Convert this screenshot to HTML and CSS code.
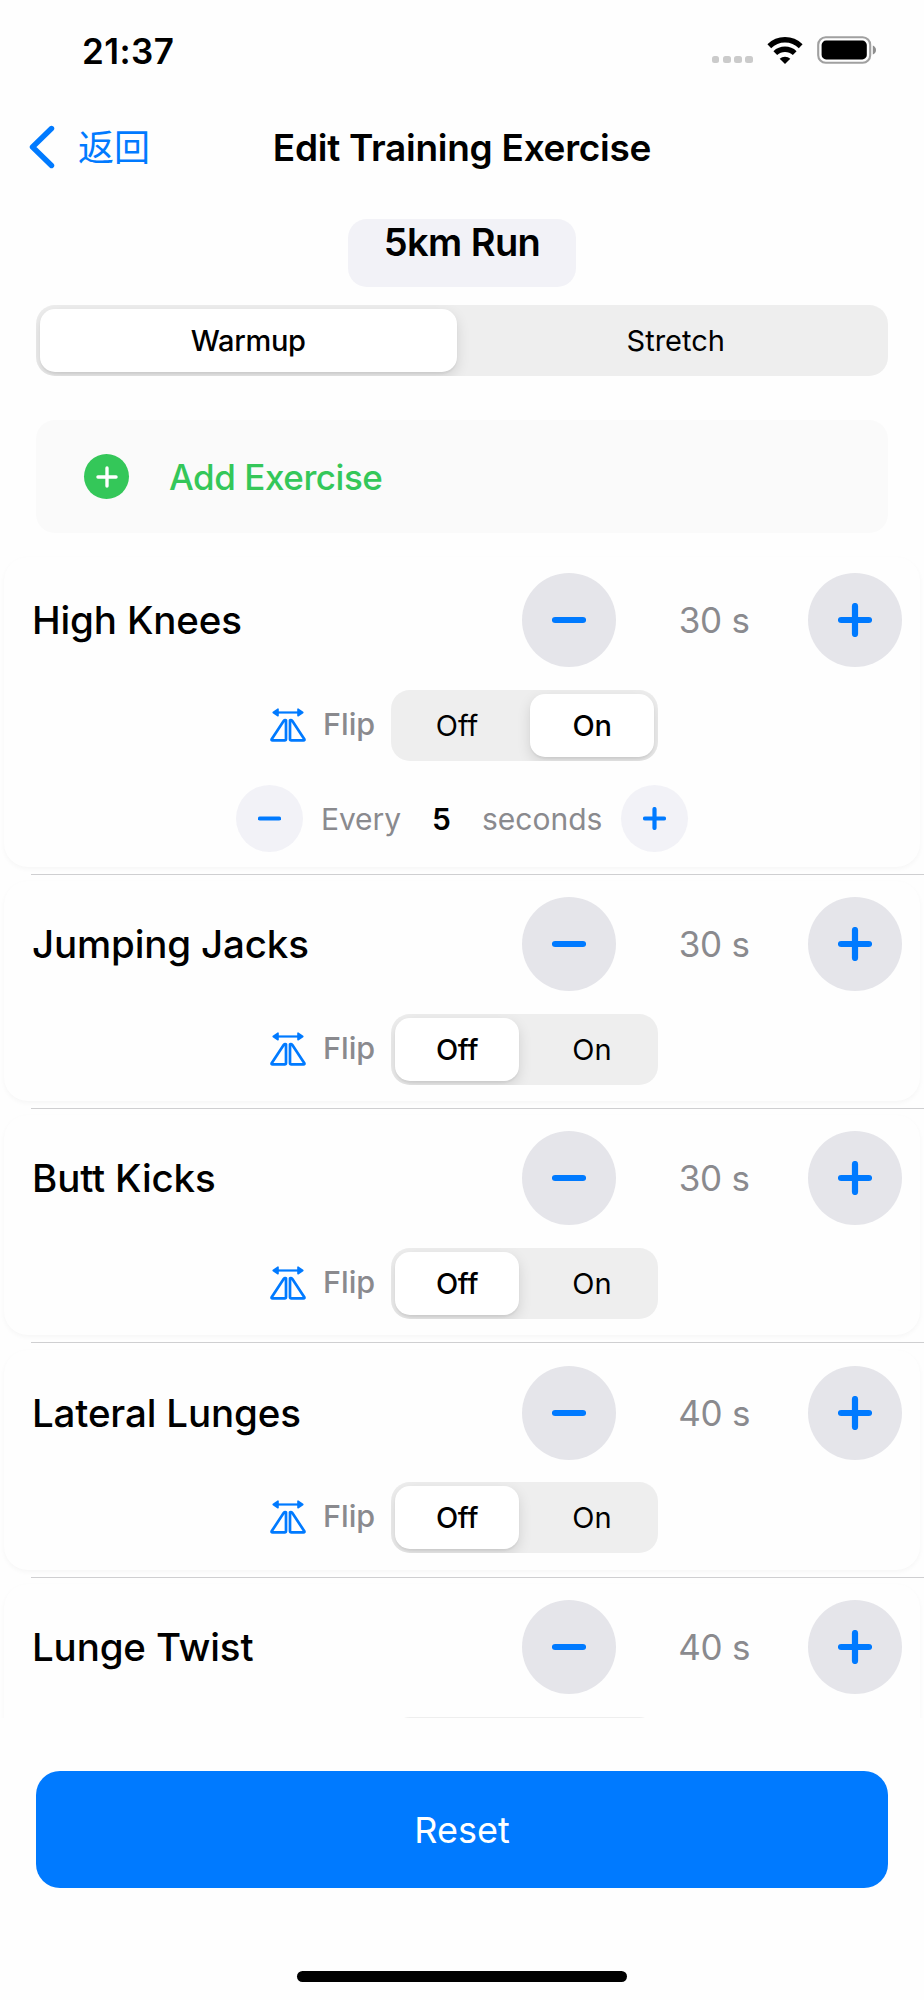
FILE: index.html
```
<!DOCTYPE html>
<html lang="en">
<head>
    <meta charset="utf-8">
    <title>Edit Training Exercise</title>
    <link rel="stylesheet" href="styles.css">
</head>
<body>
    <svg class="sprite">
        <symbol id="icon-minus" viewBox="0 0 34 34">
            <path d="M3 17H31"></path>
        </symbol>
        <symbol id="icon-plus" viewBox="0 0 34 34">
            <path d="M3 17H31M17 3V31"></path>
        </symbol>
        <symbol id="icon-flip" viewBox="0 0 36 34">
            <path d="M5 4.5H31" stroke-width="2.2"></path>
            <path d="M3.2 4.5L8 1.2V7.8ZM32.8 4.5L28 1.2V7.8Z" fill="#007aff" stroke-width="1.6"></path>
            <path d="M16 12.6V31.1Q16 32.4 14.7 32.4H2.6Q1 32.4 1.8 31L13.8 12.8Q14.6 11.8 16 12.2Z"></path>
            <path d="M20 12.6V31.1Q20 32.4 21.3 32.4H33.4Q35 32.4 34.2 31L22.2 12.8Q21.4 11.8 20 12.2Z"></path>
        </symbol>
    </svg>

    <div class="status-bar">
        <span class="time">21:37</span>
        <div class="status-icons">
            <div class="dots"><i></i><i></i><i></i><i></i></div>
            <svg class="wifi" viewBox="0 0 36 27" fill="none" stroke="#000" stroke-width="5.4">
                <path d="M2.3 9.2A22.5 22.5 0 0 1 33.7 9.2"></path>
                <path d="M8.3 16.1A14 14 0 0 1 27.7 16.1"></path>
                <path d="M12.7 21.8A7.8 7.8 0 0 1 23.3 21.8L18 27Z" fill="#000" stroke="none"></path>
            </svg>
            <svg class="battery" viewBox="0 0 60 28">
                <rect x="1.2" y="1.2" width="52" height="25.6" rx="7.5" fill="none" stroke="#a0a0a0" stroke-width="2.1"></rect>
                <rect x="4.6" y="4.6" width="45.2" height="18.8" rx="4.5"></rect>
                <path d="M55.8 9.5Q59 11 59 14T55.8 18.5Z" fill="#8e8e8e"></path>
            </svg>
        </div>
    </div>

    <div class="nav-bar">
        <a class="back">
            <svg viewBox="0 0 26 44" fill="none" stroke="currentColor" stroke-width="5.4" stroke-linecap="round" stroke-linejoin="round">
                <path d="M22.5 3.5L3.5 22L22.5 40.5"></path>
            </svg>
            <span>返回</span>
        </a>
        <h1>Edit Training Exercise</h1>
    </div>

    <div class="plan-name">5km Run</div>

    <div class="segmented segmented-wide">
        <span class="selected">Warmup</span>
        <span>Stretch</span>
    </div>

    <div class="add-exercise">
        <div class="add-icon"><svg><use href="#icon-plus"></use></svg></div>
        <span>Add Exercise</span>
    </div>

    <div class="exercise-list">
        <div class="exercise-row">
            <div class="card card-open">
                <div class="exercise-head">
                    <h2>High Knees</h2>
                    <div class="round-button"><svg><use href="#icon-minus"></use></svg></div>
                    <span class="duration">30 s</span>
                    <div class="round-button"><svg><use href="#icon-plus"></use></svg></div>
                </div>
                <div class="flip">
                    <svg class="flip-icon"><use href="#icon-flip"></use></svg>
                    <span class="flip-label">Flip</span>
                    <div class="segmented">
                        <span>Off</span>
                        <span class="selected">On</span>
                    </div>
                </div>
                <div class="interval">
                    <div class="round-button small"><svg><use href="#icon-minus"></use></svg></div>
                    <span class="every">Every</span>
                    <b>5</b>
                    <span class="seconds">seconds</span>
                    <div class="round-button small"><svg><use href="#icon-plus"></use></svg></div>
                </div>
            </div>
        </div>

        <div class="exercise-row">
            <div class="card">
                <div class="exercise-head">
                    <h2>Jumping Jacks</h2>
                    <div class="round-button"><svg><use href="#icon-minus"></use></svg></div>
                    <span class="duration">30 s</span>
                    <div class="round-button"><svg><use href="#icon-plus"></use></svg></div>
                </div>
                <div class="flip">
                    <svg class="flip-icon"><use href="#icon-flip"></use></svg>
                    <span class="flip-label">Flip</span>
                    <div class="segmented">
                        <span class="selected">Off</span>
                        <span>On</span>
                    </div>
                </div>
            </div>
        </div>

        <div class="exercise-row">
            <div class="card">
                <div class="exercise-head">
                    <h2>Butt Kicks</h2>
                    <div class="round-button"><svg><use href="#icon-minus"></use></svg></div>
                    <span class="duration">30 s</span>
                    <div class="round-button"><svg><use href="#icon-plus"></use></svg></div>
                </div>
                <div class="flip">
                    <svg class="flip-icon"><use href="#icon-flip"></use></svg>
                    <span class="flip-label">Flip</span>
                    <div class="segmented">
                        <span class="selected">Off</span>
                        <span>On</span>
                    </div>
                </div>
            </div>
        </div>

        <div class="exercise-row">
            <div class="card">
                <div class="exercise-head">
                    <h2>Lateral Lunges</h2>
                    <div class="round-button"><svg><use href="#icon-minus"></use></svg></div>
                    <span class="duration">40 s</span>
                    <div class="round-button"><svg><use href="#icon-plus"></use></svg></div>
                </div>
                <div class="flip">
                    <svg class="flip-icon"><use href="#icon-flip"></use></svg>
                    <span class="flip-label">Flip</span>
                    <div class="segmented">
                        <span class="selected">Off</span>
                        <span>On</span>
                    </div>
                </div>
            </div>
        </div>

        <!-- cut off by the bottom of the list -->
        <div class="exercise-row">
            <div class="card">
                <div class="exercise-head">
                    <h2>Lunge Twist</h2>
                    <div class="round-button"><svg><use href="#icon-minus"></use></svg></div>
                    <span class="duration">40 s</span>
                    <div class="round-button"><svg><use href="#icon-plus"></use></svg></div>
                </div>
                <div class="flip">
                    <div class="segmented"></div>
                </div>
            </div>
        </div>
    </div>

    <div class="reset-button">Reset</div>
    <div class="home-indicator"></div>
</body>
</html>
```
FILE: styles.css
```
* {
    box-sizing: border-box;
}
body {
    margin: 0;
    width: 924px;
    height: 2000px;
    overflow: hidden;
    display: flex;
    flex-direction: column;
    font-family: Inter, "Noto Sans CJK SC", sans-serif;
    background: #fefefe;
    color: #000;
}
h1, h2 {
    margin: 0;
}
svg {
    display: block;
    flex: none;
}
.sprite {
    position: absolute;
    width: 0;
    height: 0;
}

/* status bar */
.status-bar {
    display: flex;
    justify-content: space-between;
    height: 100px;
    padding: 0 47px 0 82px;
    align-items: center;
}
.time {
    padding-top: 1px;
    font-size: 35px;
    font-weight: 600;
    letter-spacing: 0.4px;
}
.status-icons {
    display: flex;
    align-items: center;
}
.dots {
    display: flex;
    gap: 3.6px;
    margin: 19px 14px 0 0;
}
.dots i {
    width: 7.6px;
    height: 7.6px;
    border-radius: 2.5px;
    background: #cbcbcb;
}
.wifi {
    width: 36px;
    height: 27px;
    margin-right: 14px;
}
.battery {
    width: 60px;
    height: 28px;
}

/* navigation */
.nav-bar {
    display: grid;
    grid-template-columns: 1fr auto 1fr;
    align-items: center;
    height: 94px;
    margin-bottom: 25px;
    padding: 0 29px;
}
.back {
    display: flex;
    align-items: center;
    gap: 23px;
    color: #007aff;
    font-size: 36px;
    line-height: 44px;
}
.back span {
    padding-top: 2px;
}
.back svg {
    width: 26px;
    height: 44px;
}
.nav-bar h1 {
    font-size: 37px;
    font-weight: 600;
    letter-spacing: -0.28px;
}

.plan-name {
    align-self: center;
    width: 228px;
    height: 68px;
    border-radius: 19px;
    background: #f2f2f7;
    font-size: 38px;
    font-weight: 600;
    line-height: 46px;
    letter-spacing: -0.6px;
    text-align: center;
    flex: none;
}

/* segmented control */
.segmented {
    display: flex;
    gap: 11px;
    width: 267px;
    height: 71px;
    padding: 4px;
    border-radius: 19px;
    background: #eeeeee;
    overflow: hidden;
    flex: none;
}
.segmented span {
    flex: 1 1 0;
    border-radius: 15px;
    font-size: 29px;
    line-height: 64px;
    letter-spacing: 0;
    text-align: center;
}
.segmented .selected {
    background: #fff;
    font-weight: 500;
    letter-spacing: -0.3px;
    box-shadow: 0 5px 14px rgba(0, 0, 0, 0.12), 0 2px 2px rgba(0, 0, 0, 0.05);
}
.segmented-wide {
    width: 852px;
    margin: 18px 36px 0;
}

.add-exercise {
    display: flex;
    align-items: center;
    gap: 40px;
    height: 113px;
    margin: 44px 36px 0;
    padding-left: 48px;
    border-radius: 19px;
    background: #fafafa;
    color: #34c759;
    font-size: 35px;
    font-weight: 500;
    letter-spacing: -0.45px;
    line-height: 44px;
    flex: none;
}
.add-icon {
    display: grid;
    place-items: center;
    width: 45px;
    height: 45px;
    border-radius: 50%;
    background: #34c759;
}
.add-icon svg {
    width: 22px;
    height: 22px;
    stroke: #fff;
    stroke-width: 5.2;
    stroke-linecap: round;
}

/* exercises */
.exercise-list {
    height: 1168px;
    margin-top: 16.5px;
    overflow: hidden;
    flex: none;
}
.exercise-row {
    position: relative;
    padding: 7.5px 4px 7px;
}
.exercise-row::after {
    content: "";
    position: absolute;
    left: 31px;
    right: 0;
    bottom: -1px;
    height: 1px;
    background: #cfcfd1;
}
.card {
    height: 219.9px;
    padding: 16px 18.5px 0 28px;
    border-radius: 24px;
    background: #fefefe;
    box-shadow: 0 2px 5px rgba(0, 0, 0, 0.035);
}
.card-open {
    height: 309.5px;
}
.exercise-head {
    display: flex;
    align-items: center;
    height: 94px;
}
.exercise-head h2 {
    flex: 1;
    font-size: 38.5px;
    font-weight: 500;
    letter-spacing: -0.15px;
    line-height: 46px;
}
.round-button {
    display: grid;
    place-items: center;
    width: 94px;
    height: 94px;
    border-radius: 50%;
    background: #e5e5ea;
    flex: none;
}
.round-button svg {
    width: 34px;
    height: 34px;
    stroke: #007aff;
    stroke-width: 6.2;
    stroke-linecap: round;
}
.round-button.small {
    width: 67px;
    height: 67px;
    background: #f2f2f7;
}
.round-button.small svg {
    width: 23px;
    height: 23px;
}
.duration {
    width: 191.5px;
    padding-left: 5px;
    color: #8a8a8e;
    font-size: 35px;
    letter-spacing: -0.2px;
    text-align: center;
}
.flip {
    display: flex;
    justify-content: flex-end;
    height: 71px;
    margin: 22.5px 243.5px 0 0;
}
.flip-icon {
    width: 36px;
    height: 34px;
    margin: 18px 17px 0 0;
    fill: none;
    stroke: #007aff;
    stroke-width: 2.7;
    stroke-linejoin: round;
}
.flip-label {
    width: 68px;
    color: #8a8a8e;
    font-size: 30.5px;
    font-weight: 500;
    line-height: 68px;
}
.interval {
    display: flex;
    align-items: center;
    height: 67px;
    margin: 24.5px 0 0 204px;
    color: #8a8a8e;
    font-size: 30px;
}
.every {
    width: 109px;
    padding-left: 18px;
    letter-spacing: -0.1px;
}
.interval b {
    width: 51px;
    padding-left: 20px;
    color: #000;
    font-weight: 600;
}
.seconds {
    width: 158px;
    padding-left: 19px;
}

/* footer */
.reset-button {
    height: 117px;
    margin: 53.5px 36px 0;
    border-radius: 24px;
    background: #007aff;
    color: #fff;
    font-size: 36px;
    line-height: 118px;
    text-align: center;
    flex: none;
}
.home-indicator {
    align-self: center;
    width: 330px;
    height: 11px;
    margin-top: 83px;
    border-radius: 6px;
    background: #000;
    flex: none;
}
```
